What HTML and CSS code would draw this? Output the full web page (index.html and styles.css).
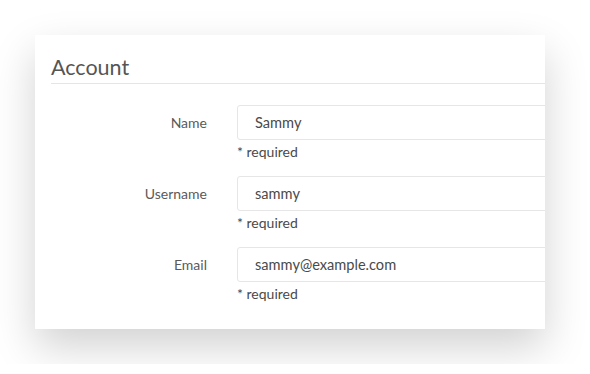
FILE: index.html
```html
<!DOCTYPE html>
<html lang="en">
<head>
    <meta charset="UTF-8">
    <title>Account</title>
    <link rel="stylesheet" href="styles.css">
</head>
<body>
    <div class="card">
        <h2 class="card-title">Account</h2>

        <div class="form-row">
            <label for="name">Name</label>
            <div class="field">
                <input type="text" id="name" value="Sammy">
                <div class="hint">* required</div>
            </div>
        </div>

        <div class="form-row">
            <label for="username">Username</label>
            <div class="field">
                <input type="text" id="username" value="sammy">
                <div class="hint">* required</div>
            </div>
        </div>

        <div class="form-row">
            <label for="email">Email</label>
            <div class="field">
                <input type="text" id="email" value="sammy@example.com">
                <div class="hint">* required</div>
            </div>
        </div>
    </div>
</body>
</html>
```

FILE: styles.css
```css
body {
    margin: 0;
    padding: 35px;
    background: #fff;
    font-family: Lato, "Open Sans", sans-serif;
    color: #4a4a4a;
}
.card {
    width: 510px;
    height: 294px;
    box-sizing: border-box;
    padding: 18px 0 0 16px;
    background: #fff;
    overflow: hidden;
    box-shadow: 0 18px 40px rgba(0, 0, 0, 0.18);
}
.card-title {
    margin: 0 0 21px;
    padding-bottom: 2px;
    border-bottom: 1px solid #e5e5e5;
    font-size: 21.5px;
    font-weight: normal;
    color: #555;
    line-height: 28px;
}
.form-row {
    display: flex;
    gap: 30px;
    margin-bottom: 13px;
}
.form-row label {
    width: 156px;
    flex: none;
    text-align: right;
    font-size: 14px;
    color: #5a5a5a;
    line-height: 35px;
}
.field {
    flex: none;
    width: 400px;
}
.field input {
    display: block;
    width: 100%;
    height: 35px;
    box-sizing: border-box;
    padding: 0 17px;
    border: 1px solid #e6e6e6;
    border-radius: 3px;
    font-family: inherit;
    font-size: 14.6px;
    color: #4a4a4a;
}
.hint {
    font-size: 14px;
    line-height: 23px;
}
```
